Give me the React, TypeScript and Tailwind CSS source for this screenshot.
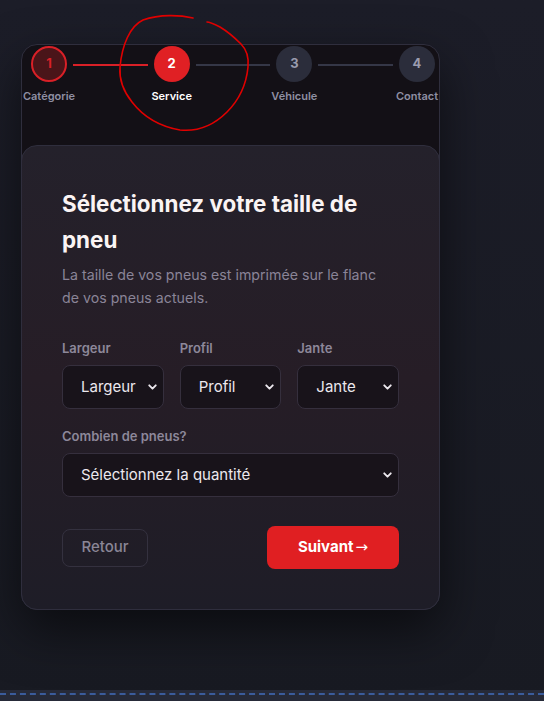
import { ChevronDown } from "lucide-react";

const steps = [
  { n: 1, label: "Catégorie", state: "done" },
  { n: 2, label: "Service", state: "active" },
  { n: 3, label: "Véhicule", state: "todo" },
  { n: 4, label: "Contact", state: "todo" },
];

function Step({ n, label, state }: { n: number; label: string; state: string }) {
  const circle =
    state === "done"
      ? "bg-[#4a1519] border-2 border-[#d92027] text-[#d92027]"
      : state === "active"
        ? "bg-[#e02024] text-white"
        : "bg-[#2b2d3b] text-[#9a9cae]";
  return (
    <div className="relative flex flex-col items-center w-9 shrink-0">
      <div
        className={`w-9 h-9 rounded-full flex items-center justify-center text-[13px] font-bold ${circle}`}
      >
        {n}
      </div>
      <span
        className={`mt-[6px] whitespace-nowrap text-[11px] leading-4 font-semibold ${
          state === "active" ? "text-white" : "text-[#8f8fa3]"
        }`}
      >
        {label}
      </span>
    </div>
  );
}

function Line({ red }: { red?: boolean }) {
  return (
    <div
      className={`flex-1 h-[2px] mt-[18px] mx-[6px] ${red ? "bg-[#d92027]" : "bg-[#353747]"}`}
    />
  );
}

function Select({ label }: { label: string }) {
  return (
    <div className="relative">
      <select className="w-full h-11 appearance-none rounded-lg border border-[#352f3d] bg-[#18131a] pl-[18px] pr-6 text-[15px] text-[#ece8ee] outline-none">
        <option>{label}</option>
      </select>
      <ChevronDown
        className="pointer-events-none absolute right-[5px] top-1/2 -translate-y-1/2 text-[#ece8ee]"
        size={13}
        strokeWidth={3.5}
      />
    </div>
  );
}

function App() {
  return (
    <div className="relative min-h-screen bg-gradient-to-b from-[#1c1d28] to-[#181a22] font-['Inter',sans-serif] flex flex-col">
      <div className="flex-1 pt-[44px] pl-[21px]">
        <div className="w-[419px] rounded-2xl border border-[#2f2e3d] bg-[#131016] shadow-[0_20px_50px_rgba(0,0,0,0.55)] flex flex-col">
          <div className="flex items-start pt-px pl-[9px] pr-[4px]">
            <Step {...steps[0]} />
            <Line red />
            <Step {...steps[1]} />
            <Line />
            <Step {...steps[2]} />
            <Line />
            <Step {...steps[3]} />
          </div>

          <div className="mt-[41px] -mx-px -mb-px rounded-2xl border border-[#2f2e3d] bg-gradient-to-b from-[#24212b] via-[#261d26] to-[#1e1d27] px-10 pt-[40px] pb-10">
            <h2 className="text-[22.4px] leading-[36px] font-bold text-[#faf4f4]">
              Sélectionnez votre taille de pneu
            </h2>
            <p className="mt-[6px] max-w-[325px] text-[14.2px] leading-[22.5px] text-[#8a8497]">
              La taille de vos pneus est imprimée sur le flanc de vos pneus actuels.
            </p>

            <div className="mt-[29px] grid grid-cols-3 gap-4">
              {["Largeur", "Profil", "Jante"].map((l) => (
                <div key={l}>
                  <div className="mb-[7px] text-[13px] leading-5 font-semibold text-[#8d889a]">
                    {l}
                  </div>
                  <Select label={l} />
                </div>
              ))}
            </div>

            <div className="mt-[17px] mb-[7px] text-[13px] leading-5 font-semibold text-[#8d889a]">
              Combien de pneus?
            </div>
            <Select label="Sélectionnez la quantité" />

            <div className="mt-[29px] flex items-center justify-between">
              <button className="h-[38px] w-[86px] rounded-lg border border-[#34313f] text-[15px] font-medium text-[#8a8696]">
                Retour
              </button>
              <button className="h-[43px] w-[132px] rounded-lg bg-[#e01f22] text-[15px] font-bold text-white flex items-center justify-center">
                Suivant
                <span className="ml-[2px] font-['DejaVu_Sans',sans-serif] font-normal">→</span>
              </button>
            </div>
          </div>
        </div>
      </div>

      <div className="h-[11px] bg-[#262a38] pt-[3px]">
        <div className="border-t-2 border-dashed border-[#3a5c9c]" />
      </div>

      <svg
        className="pointer-events-none absolute left-0 top-0"
        width="544"
        height="160"
        viewBox="0 0 544 160"
        fill="none"
      >
        <path
          d="M193 18 C180 15 160 14 143 20 C130 26 122 45 120 67 C119 80 124 92 132 102 C142 115 157 126 180 130 C200 132 215 124 227 112 C238 101 246 88 248 67 C249 57 247 50 241 44 C233 36 225 30 220 27 C214 24 210 22 207 22"
          stroke="#e00000"
          strokeWidth="1.6"
          strokeLinecap="round"
        />
      </svg>
    </div>
  );
}

export default App;
